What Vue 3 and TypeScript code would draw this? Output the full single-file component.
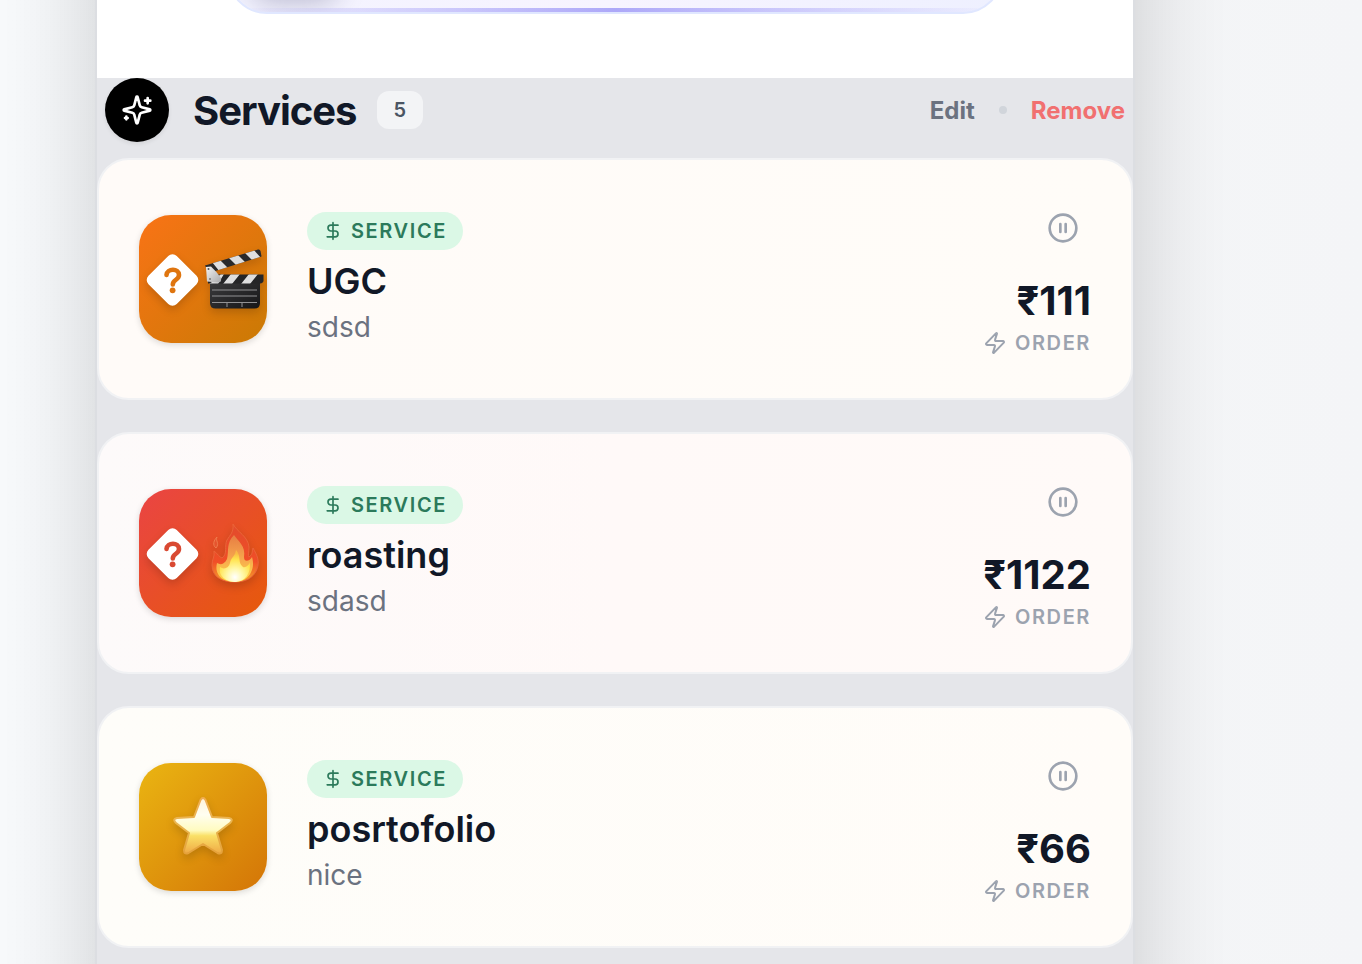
<script setup lang="ts">
interface Service {
  id: string
  name: string
  description: string
  price: string
  art: 'clapper' | 'fire' | 'star'
}

const services: Service[] = [
  { id: 'ugc', name: 'UGC', description: 'sdsd', price: '₹111', art: 'clapper' },
  { id: 'roasting', name: 'roasting', description: 'sdasd', price: '₹1122', art: 'fire' },
  { id: 'portfolio', name: 'posrtofolio', description: 'nice', price: '₹66', art: 'star' },
]
const total = 5
</script>

<template>
  <div class="page">
    <main class="panel">
      <div class="intro">
        <div class="banner"><span class="blob"></span><span class="strip"></span></div>
      </div>

      <header class="head">
        <span class="mark">
          <svg width="32" height="32" viewBox="0 0 24 24" fill="none" stroke="currentColor" stroke-width="2" stroke-linecap="round" stroke-linejoin="round" aria-hidden="true">
            <path d="M9.937 15.5A2 2 0 0 0 8.5 14.063l-6.135-1.582a.5.5 0 0 1 0-.962L8.5 9.936A2 2 0 0 0 9.937 8.5l1.582-6.135a.5.5 0 0 1 .963 0L14.063 8.5A2 2 0 0 0 15.5 9.937l6.135 1.581a.5.5 0 0 1 0 .964L15.5 14.063a2 2 0 0 0-1.437 1.437l-1.582 6.135a.5.5 0 0 1-.963 0z" />
            <path d="M20 3v4M22 5h-4M4 17v2M5 18H3" />
          </svg>
        </span>
        <h2>Services</h2>
        <span class="count">{{ total }}</span>
        <div class="actions">
          <button type="button" class="edit">Edit</button>
          <span class="dot"></span>
          <button type="button" class="remove">Remove</button>
        </div>
      </header>

      <ul class="list">
        <li v-for="s in services" :key="s.id" class="card" :class="s.art">
          <div class="tile">
            <svg v-if="s.art !== 'star'" class="unknown" viewBox="0 0 60 60" aria-hidden="true">
              <rect x="10.500" y="11" width="40" height="40" rx="6" fill="#fff" transform="rotate(45 30.500 31)" />
              <path class="hook" d="M24.500 26C25 19 37 19 37 26C37 31 30.800 30.500 30.800 35.500" fill="none" stroke-width="4.600" stroke-linecap="round" />
              <circle class="point" cx="30.600" cy="41.300" r="2.900" />
            </svg>

            <svg v-if="s.art === 'clapper'" class="art" viewBox="0 0 60 60" aria-hidden="true">
              <defs>
                <linearGradient id="slate" x1="0" y1="0" x2="1" y2="1">
                  <stop offset="0" stop-color="#3b3b3d" /><stop offset="1" stop-color="#161618" />
                </linearGradient>
                <linearGradient id="hinge" x1="0" y1="0" x2="1" y2="1">
                  <stop offset="0" stop-color="#f4f4f4" /><stop offset="1" stop-color="#a9a9ab" />
                </linearGradient>
                <clipPath id="upper"><path d="M1 16.500L54 .500Q56 0 56.500 2L57.500 7.500L5 24Z" /></clipPath>
                <clipPath id="lower"><path d="M4 25.500H59.500V31.500Q59.500 34 56 34.500H4Z" /></clipPath>
              </defs>
              <path d="M6 32H56V54Q56 59.500 50.500 59.500H11.500Q6 59.500 6 54Z" fill="url(#slate)" />
              <g clip-path="url(#upper)">
                <path d="M0 0H60V26H0Z" fill="#29292b" />
                <path d="M8 13L16 11L25 20L16 23ZM24 8L33 5L42 14L33 17ZM40 3L49 0L57 9L49 12Z" fill="#dededf" />
              </g>
              <g clip-path="url(#lower)">
                <path d="M0 25H60V35H0Z" fill="#252527" />
                <path d="M27 25H36L28 35H19ZM45 25H54L46 35H37ZM8 33L17 25H20L14 35H5Z" fill="#dededf" />
              </g>
              <path d="M2 18L7 17.500Q12 22 17 29Q18 34 13 33.500L3 32.500Z" fill="url(#hinge)" />
              <circle cx="4.500" cy="20" r="1" fill="#555" /><circle cx="6" cy="30" r="1" fill="#777" />
              <path d="M8 41H53M8 47H53M8 53.500H53M23 53.500V58M38 53.500V58" fill="none" stroke="#929294" stroke-width="1" />
            </svg>

            <svg v-if="s.art === 'fire'" class="art" viewBox="0 0 60 60" aria-hidden="true">
              <defs>
                <linearGradient id="outerFlame" x1="0" y1="0" x2="0" y2="1">
                  <stop offset="0" stop-color="#e24b2c" /><stop offset=".65" stop-color="#f04e27" /><stop offset="1" stop-color="#f5a12c" />
                </linearGradient>
                <linearGradient id="midFlame" x1="0" y1="0" x2="0" y2="1">
                  <stop offset="0" stop-color="#e77d43" /><stop offset=".5" stop-color="#f6a64d" /><stop offset="1" stop-color="#ffdc4a" />
                </linearGradient>
                <radialGradient id="coreFlame" cx=".5" cy=".85" r=".75">
                  <stop offset="0" stop-color="#fff" /><stop offset=".35" stop-color="#fff8ab" /><stop offset=".75" stop-color="#ffe34d" /><stop offset="1" stop-color="#f9ba42" />
                </radialGradient>
              </defs>
              <path d="M29 1C33 9 44 13 45 24C45 29 44 32 45 34C49 31 48 28 49 25C53 32 56 38 53 46C50 55 41 59 31 59C18 59 8 54 8 42C8 36 11 34 10 28C14 31 15 34 18 35C24 31 20 23 23 17C26 12 30 9 29 1Z" fill="url(#outerFlame)" stroke="#e96439" stroke-width="1" />
              <path d="M13 14C11 18 16 20 12 25C8 22 10 17 13 14Z" fill="#e5542e" stroke="#ed7c4d" stroke-width="1" />
              <path d="M30 12C34 18 42 23 40 34C40 40 46 38 48 34C52 47 44 59 31 59C19 59 10 52 13 40C16 42 20 42 23 36C25 28 22 20 30 12Z" fill="url(#midFlame)" />
              <path d="M32 27C38 34 33 39 39 44C42 45 45 42 46 39C47 51 41 58 32 59C22 59 14 53 16 44C20 47 25 45 26 40C27 34 31 34 32 27Z" fill="url(#coreFlame)" />
            </svg>

            <svg v-if="s.art === 'star'" class="art" viewBox="0 0 60 60" aria-hidden="true">
              <defs>
                <linearGradient id="starFill" x1="0" y1="0" x2="0" y2="1">
                  <stop offset="0" stop-color="#fff3dc" /><stop offset=".3" stop-color="#fffef0" /><stop offset=".58" stop-color="#fffbc0" /><stop offset=".68" stop-color="#fae067" /><stop offset="1" stop-color="#efa944" />
                </linearGradient>
                <linearGradient id="starEdge" x1="0" y1="0" x2="0" y2="1">
                  <stop offset="0" stop-color="#f0ad52" /><stop offset=".5" stop-color="#e9b651" /><stop offset="1" stop-color="#e5a13b" />
                </linearGradient>
              </defs>
              <path d="M27.500 3Q30 -1 32.500 3L39 20L56 21Q61 22 57 26L44 36L49 53Q49 58 44.500 56L30 47L15.500 56Q11 58 11 53L16 36L3 26Q-1 22 4 21L21 20Z" fill="url(#starFill)" stroke="url(#starEdge)" stroke-width="2" stroke-linejoin="round" />
            </svg>
          </div>

          <div class="info">
            <span class="badge">
              <svg width="20" height="20" viewBox="0 0 24 24" fill="none" stroke="currentColor" stroke-width="2" stroke-linecap="round" stroke-linejoin="round" aria-hidden="true">
                <path d="M12 2v20M18 5H9.500a3.500 3.500 0 0 0 0 7h5a3.500 3.500 0 0 1 0 7H5" />
              </svg>
              SERVICE
            </span>
            <h3>{{ s.name }}</h3>
            <p>{{ s.description }}</p>
          </div>

          <div class="side">
            <button type="button" class="pause" :aria-label="`Pause ${s.name}`">
              <svg width="32" height="32" viewBox="0 0 24 24" fill="none" stroke="currentColor" stroke-width="2" stroke-linecap="round" aria-hidden="true">
                <circle cx="12" cy="12" r="10" /><path d="M10 15V9M14 15V9" />
              </svg>
            </button>
            <strong>{{ s.price }}</strong>
            <span class="order">
              <svg width="24" height="24" viewBox="0 0 24 24" fill="none" stroke="currentColor" stroke-width="2" stroke-linecap="round" stroke-linejoin="round" aria-hidden="true">
                <path d="M4 14a1 1 0 0 1-.780-1.630l9.900-10.200a.5.5 0 0 1 .860.460l-1.920 6.020A1 1 0 0 0 13 10h7a1 1 0 0 1 .780 1.630l-9.900 10.200a.5.5 0 0 1-.860-.460l1.920-6.020A1 1 0 0 0 11 14z" />
              </svg>
              ORDER
            </span>
          </div>
        </li>
      </ul>
    </main>
  </div>
</template>

<style>
html, body { margin: 0; }
body { background: #f5f6f8; overflow: hidden; }
</style>

<style scoped>
* { box-sizing: border-box; }
.page {
  min-height: 100vh;
  display: flex;
  padding: 0 227px 0 95px;
  overflow: hidden;
  background: linear-gradient(90deg, #f8fafc, #f4f5f7);
  font-family: Inter, "Liberation Sans", sans-serif;
  color: #111827;
}
.panel {
  position: relative;
  isolation: isolate;
  flex: 1;
  min-width: 0;
  border: solid #dcdee2;
  border-width: 0 2px;
  background: #e5e6ea;
  padding-bottom: 16px;
}
.panel::before {
  content: "";
  position: absolute;
  inset: -200px -2px;
  z-index: -1;
  background: #e5e6ea;
  border: 2px solid #dcdee2;
  box-shadow: 0 0 100px rgba(0, 0, 0, 0.18);
}
.intro {
  display: flex;
  align-items: flex-start;
  height: 78px;
  padding: 0 130px;
  overflow: hidden;
  background: #fff;
}
.banner {
  position: relative;
  flex: 1;
  height: 80px;
  margin-top: -66px;
  overflow: hidden;
  border: 2px solid #e0e7ff;
  border-radius: 40px;
  background: linear-gradient(90deg, #f3f3ff, #f7f4ff, #eef0ff);
}
.blob {
  position: absolute;
  left: 24px;
  bottom: 16px;
  width: 84px;
  height: 60px;
  border-radius: 16px;
  box-shadow: 0 6px 28px rgba(30, 27, 75, 0.28);
}
.strip {
  position: absolute;
  left: 0;
  right: 0;
  bottom: 0;
  height: 4px;
  background: linear-gradient(90deg, transparent, #ada8f8, transparent);
}
.head {
  display: flex;
  align-items: center;
  padding: 0 8px;
  margin-bottom: 16px;
}
.mark {
  display: grid;
  place-items: center;
  width: 64px;
  height: 64px;
  margin-right: 24px;
  border-radius: 50%;
  background: #000;
  color: #fff;
  box-shadow: 0 2px 4px rgba(0, 0, 0, 0.08);
}
h2, h3, p { margin: 0; }
h2 {
  padding-top: 2px;
  font-size: 40px;
  line-height: 56px;
  font-weight: 700;
  letter-spacing: -1px;
}
.count {
  margin-left: 20px;
  padding: 4px 17px;
  border-radius: 12px;
  background: #f3f4f6;
  color: #4b5563;
  font-size: 20px;
  line-height: 30px;
  font-weight: 600;
}
.actions {
  display: flex;
  align-items: center;
  gap: 24px;
  margin-left: auto;
}
button {
  padding: 0;
  border: 0;
  background: none;
  font: inherit;
  cursor: pointer;
}
.edit, .remove {
  padding-top: 2px;
  font-size: 24px;
  line-height: 32px;
  font-weight: 700;
}
.edit { color: #6b7280; }
.remove { color: #f17070; }
.dot {
  width: 8px;
  height: 8px;
  border-radius: 50%;
  background: #d1d5db;
}
.list {
  display: flex;
  flex-direction: column;
  gap: 32px;
  margin: 0;
  padding: 0;
  list-style: none;
}
.card {
  display: flex;
  align-items: center;
  gap: 40px;
  padding: 40px;
  border: 2px solid #f1f2f4;
  border-radius: 32px;
}
.card.clapper { background: linear-gradient(90deg, #fffbf8, #fffcf8); }
.card.fire { background: linear-gradient(90deg, #fdfafa, #fff9f8, #fffaf8); }
.card.star { background: linear-gradient(90deg, #fefdf9, #fffcf8); }
.tile {
  display: flex;
  align-items: center;
  justify-content: center;
  gap: 2px;
  flex: none;
  width: 128px;
  height: 128px;
  border-radius: 32px;
  box-shadow: 0 2px 6px rgba(0, 0, 0, 0.14);
}
.clapper .tile { background: linear-gradient(135deg, #f97316, #ca7a04); color: #df750f; }
.fire .tile { background: linear-gradient(135deg, #ea4444, #e65a0a); color: #d94932; }
.star .tile { background: linear-gradient(135deg, #eab512, #d47507); }
.unknown, .art {
  flex: none;
  width: 60px;
  height: 60px;
  filter: drop-shadow(0 4px 4px rgba(0, 0, 0, 0.16));
}
.hook { stroke: currentColor; }
.point { fill: currentColor; }
.info {
  flex: 1;
  min-width: 0;
  padding-top: 2px;
}
.badge {
  display: flex;
  align-items: center;
  gap: 8px;
  width: fit-content;
  padding: 4px 16px;
  border-radius: 20px;
  background: #dbf8e6;
  color: #2c7a5b;
  font-size: 20px;
  line-height: 30px;
  font-weight: 600;
  letter-spacing: 1.6px;
}
h3 {
  margin: 8px 0 2px;
  font-size: 36px;
  line-height: 46px;
  font-weight: 600;
}
p {
  color: #6b7280;
  font-size: 28px;
  line-height: 42px;
}
.side {
  display: flex;
  flex-direction: column;
  align-items: flex-end;
}
.pause {
  display: grid;
  place-items: center;
  width: 56px;
  height: 56px;
  margin-bottom: 18px;
  color: #9ca3af;
}
strong {
  font-size: 40px;
  line-height: 54px;
  font-weight: 700;
}
.order {
  display: flex;
  align-items: center;
  gap: 8px;
  color: #9ca3af;
  font-size: 20px;
  line-height: 30px;
  font-weight: 600;
  letter-spacing: 1.6px;
}
</style>
